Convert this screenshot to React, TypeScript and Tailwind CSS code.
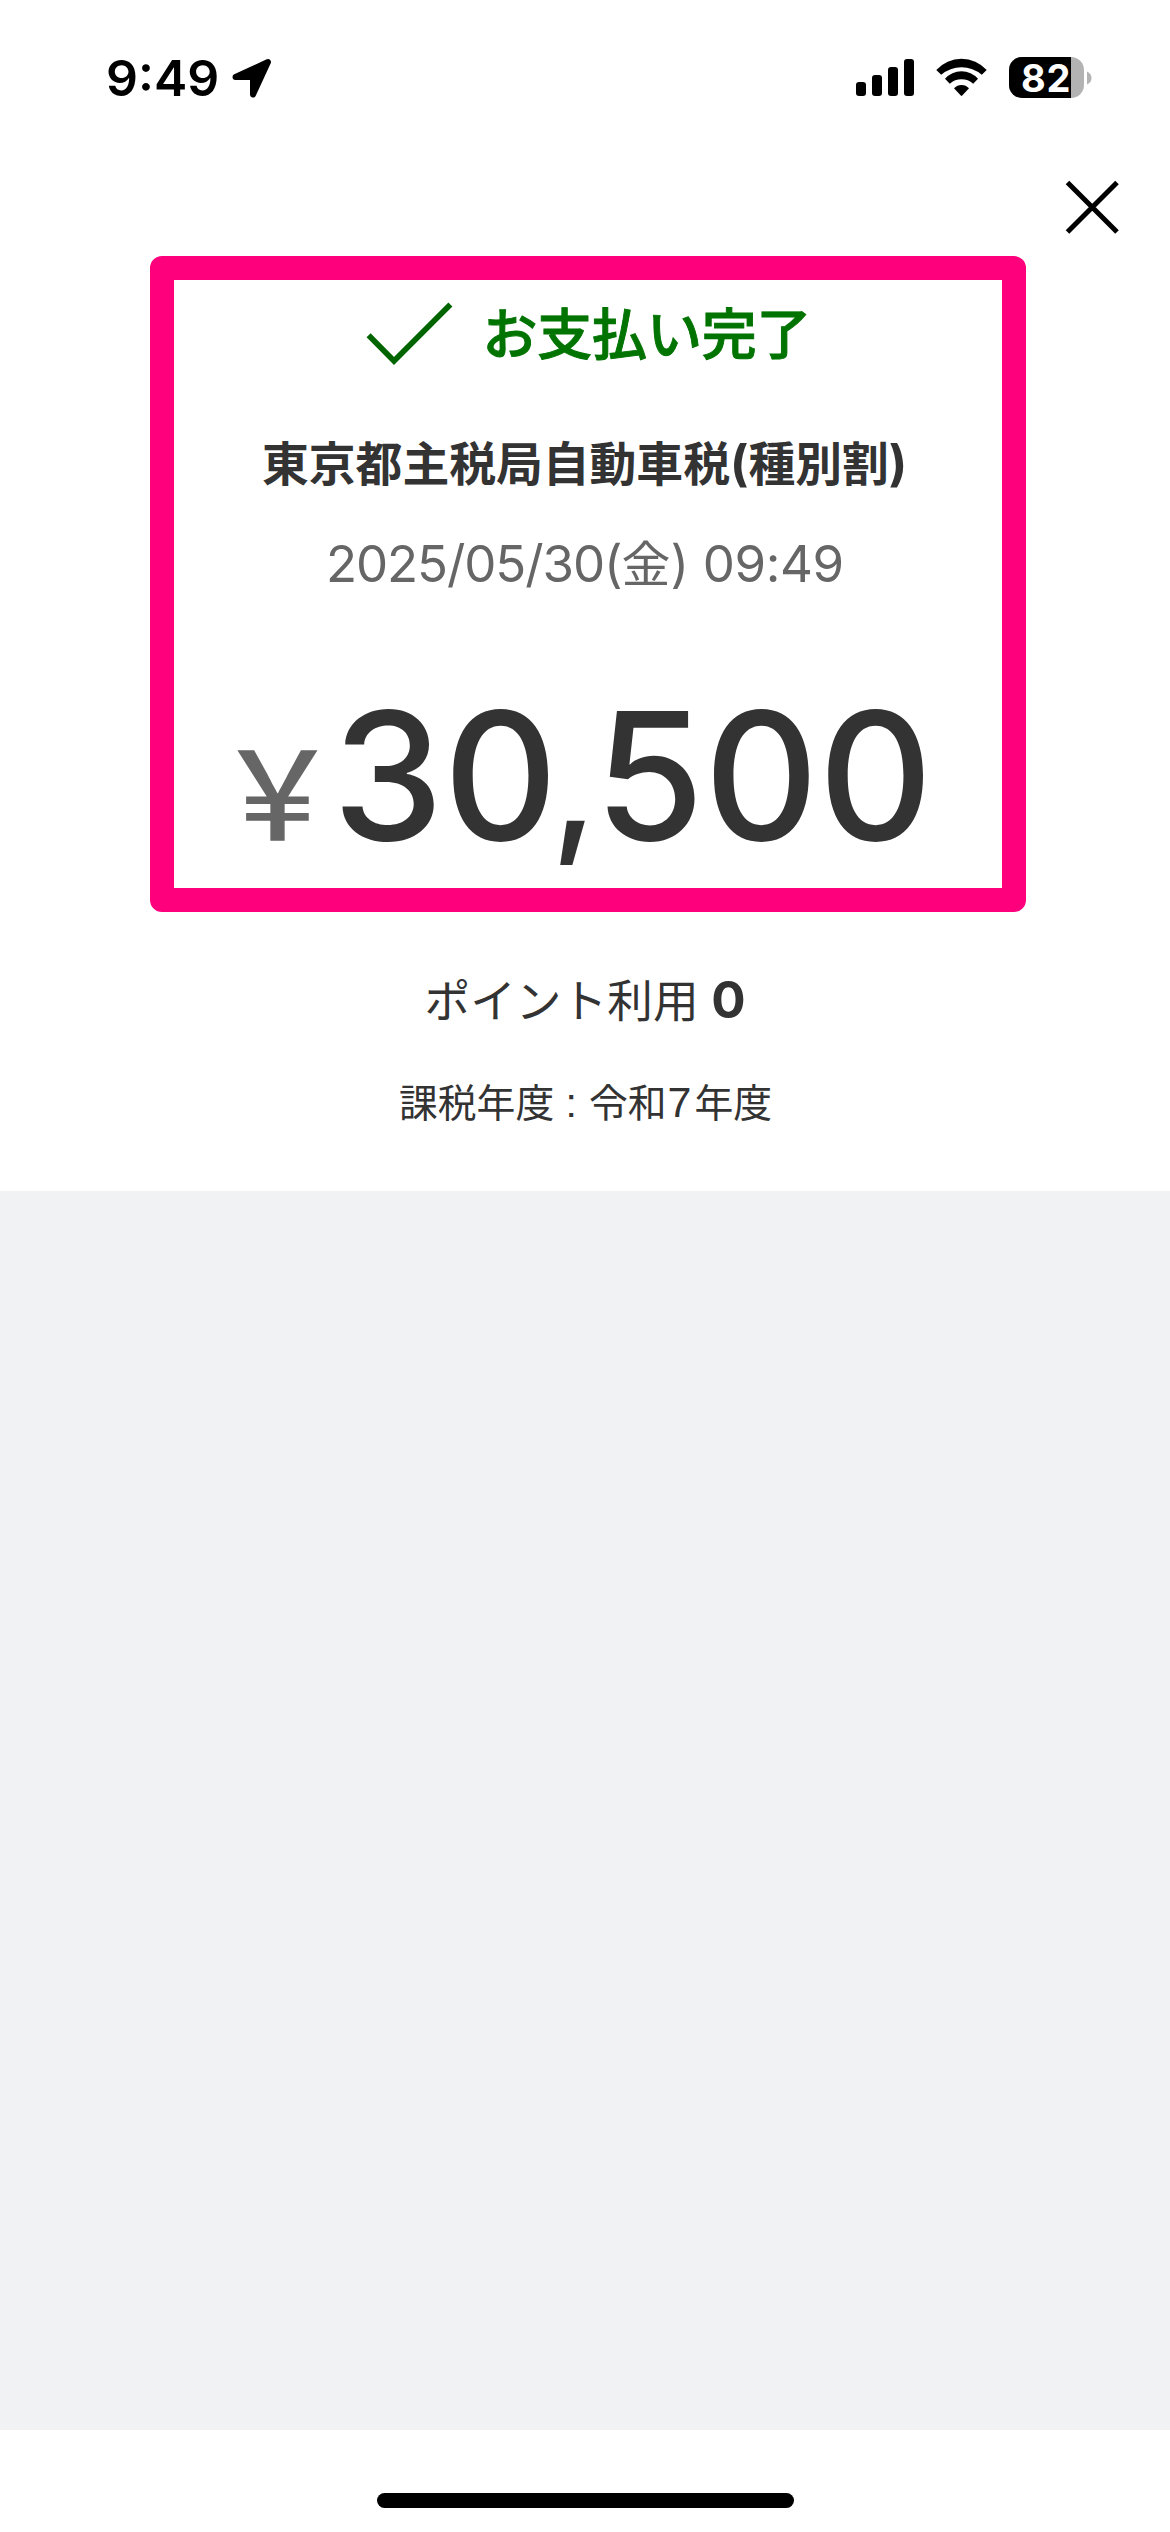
import React from "react";

function LocationArrow() {
  return (
    <svg className="ml-[15px] mt-[58px] h-[41px] w-[41px]" viewBox="231 58 41 41">
      <path
        d="M235.5 77 L268 62 L253 94.5 L253 77 Z"
        fill="#000"
        stroke="#000"
        strokeWidth="6"
        strokeLinejoin="round"
      />
    </svg>
  );
}

function SignalBars() {
  return (
    <div className="mt-[59px] flex h-[37px] items-end gap-1.5">
      <div className="h-[14px] w-2.5 rounded-[3px] bg-black" />
      <div className="h-[21px] w-2.5 rounded-[3px] bg-black" />
      <div className="h-[29px] w-2.5 rounded-[3px] bg-black" />
      <div className="h-[37px] w-2.5 rounded-[3px] bg-black" />
    </div>
  );
}

function Wifi() {
  return (
    <svg className="ml-[21px] mt-[58px] h-[40px] w-[53px]" viewBox="935 58 53 40">
      <path d="M936.3 70 A33.9 33.9 0 0 1 986.7 70 L981.8 74.7 A31.5 31.5 0 0 0 941.2 74.7 Z" />
      <path d="M945 78.7 A21.8 21.8 0 0 1 978 78.7 L973.2 83.7 A17.5 17.5 0 0 0 949.8 83.7 Z" />
      <path d="M954 88.3 A10 10 0 0 1 969 88.3 L962.2 95.6 Q961.5 96.2 960.8 95.6 Z" />
    </svg>
  );
}

function Battery() {
  return (
    <div className="ml-[21px] mt-[57px] flex h-[41px] items-center">
      <div className="flex h-[41px] w-[75px] rounded-[13px] bg-[#b3b3b3]">
        <div className="h-[41px] w-[62px] rounded-l-[13px] bg-black pl-[12px] text-[38px] leading-[43px] font-bold tracking-[0.7px] text-white">
          82
        </div>
      </div>
      <svg className="ml-[3px] h-[14px] w-[5px]" viewBox="0 0 5 14" fill="#b3b3b3">
        <path d="M0 0.5 Q4.5 2.5 4.5 7 Q4.5 11.5 0 13.5 Z" />
      </svg>
    </div>
  );
}

function StatusBar() {
  return (
    <div className="flex h-[141px] items-start">
      <span className="ml-[106px] mt-[53px] w-[110px] text-[50px] leading-[50px] font-semibold">9:49</span>
      <LocationArrow />
      <div className="ml-[584px] flex items-start">
        <SignalBars />
        <Wifi />
        <Battery />
      </div>
    </div>
  );
}

export default function App() {
  return (
    <div className="flex h-[2532px] w-[1170px] flex-col overflow-hidden bg-white font-[Inter,'Noto_Sans_CJK_JP',sans-serif] whitespace-nowrap text-[#333333]">
      <header className="h-[256px] text-black">
        <StatusBar />
        <button className="mt-[38px] ml-[1064px] block h-[56px] w-[56px]" aria-label="close">
          <svg viewBox="0 0 56 56" className="h-full w-full" stroke="#000" strokeWidth="5">
            <path d="M3.5 3.5 L53 53 M53 3.5 L3.5 53" />
          </svg>
        </button>
      </header>

      <section className="ml-[150px] h-[656px] w-[876px] rounded-xl border-24 border-[#ff007d] pt-[21px]">
        <div className="flex items-start pl-[192px]">
          <svg className="h-[66px] w-[88px]" viewBox="366 301 88 66" fill="none" stroke="#006400" strokeWidth="5.7">
            <path d="M368.6 335.3 L394 361 L450.4 304.4" />
          </svg>
          <h1 className="mt-0.5 ml-[28.5px] font-['Noto_Sans_CJK_JP',sans-serif] text-[55px] leading-none font-medium tracking-[-0.2px] text-[#007300] [-webkit-text-stroke:0.9px_#007300]">
            お支払い完了
          </h1>
        </div>

        <div className="mt-[71px] flex items-baseline pl-[88px] leading-none font-bold">
          <span className="font-['Noto_Sans_CJK_JP',sans-serif] text-[46.8px]">東京都主税局自動車税</span>
          <span className="text-[49px]">(</span>
          <span className="font-['Noto_Sans_CJK_JP',sans-serif] text-[46.8px]">種別割</span>
          <span className="text-[49px]">)</span>
        </div>

        <div className="mt-[48px] flex items-baseline pl-[152px] leading-none text-[#666666]">
          <span className="text-[51px] tracking-[-1.1px]">2025/05/30(</span>
          <span className="font-['Noto_Sans_CJK_JP',sans-serif] text-[49px]">金</span>
          <span className="text-[51px] tracking-[-0.4px] whitespace-pre">) 09:49</span>
        </div>

        <div className="mt-[99px] flex items-baseline pl-[42px] leading-none font-medium">
          <span className="w-[116.5px] font-['Noto_Sans_CJK_JP',sans-serif] text-[123px] text-[#666666] [font-feature-settings:'fwid']">
            ¥
          </span>
          <span className="text-[177px]">
            30<span className="relative -top-[3px] -ml-[7px] inline-block w-[44px] text-[155px] leading-none">,</span>500
          </span>
        </div>
      </section>

      <section className="h-[279px]">
        <div className="mt-[62px] flex items-baseline pl-[424.5px] leading-none">
          <span className="font-['Noto_Sans_CJK_JP',sans-serif] text-[45.7px]">ポイント利用</span>
          <span className="ml-[12.5px] text-[51px] font-bold">0</span>
        </div>
        <div className="mt-[56px] flex items-baseline pl-[399px] leading-none">
          <span className="font-['Noto_Sans_CJK_JP',sans-serif] text-[38.8px]">課税年度</span>
          <span className="mr-[0.5px] font-['Liberation_Sans',sans-serif] text-[41px] whitespace-pre"> : </span>
          <span className="font-['Noto_Sans_CJK_JP',sans-serif] text-[38.8px]">令和</span>
          <span className="w-[28px] pl-px font-['Liberation_Sans',sans-serif] text-[43px]">7</span>
          <span className="font-['Noto_Sans_CJK_JP',sans-serif] text-[38.8px]">年度</span>
        </div>
      </section>

      <main className="h-[1239px] bg-[#f1f2f4]" />

      <footer className="flex h-[102px] justify-center pt-[63px]">
        <div className="h-[15px] w-[417px] rounded-full bg-black" />
      </footer>
    </div>
  );
}
